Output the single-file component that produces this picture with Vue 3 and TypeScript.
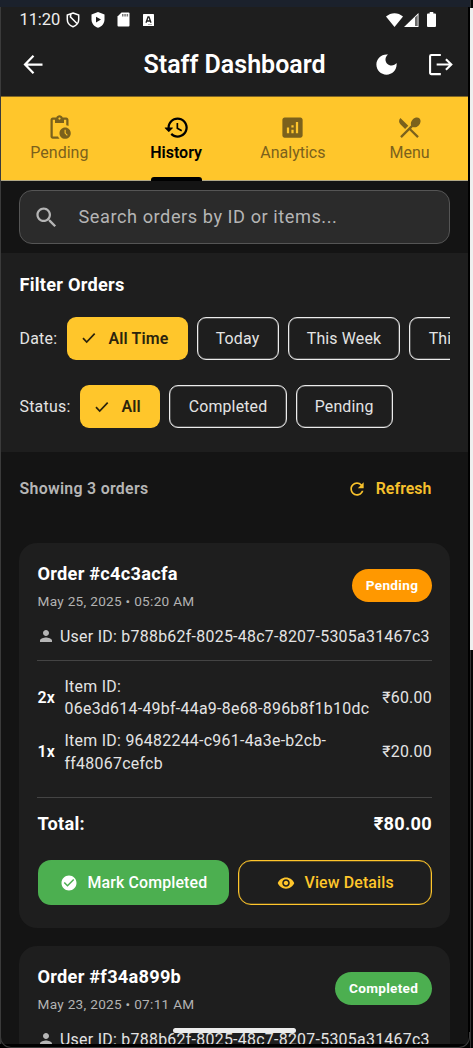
<script setup lang="ts">
interface Item { qty: string; lines: string[]; price: string }
interface Order { id: string; date: string; status: string; user: string; items: Item[]; total: string }

const icons = {
  pending: 'M17 12c-2.76 0-5 2.24-5 5s2.24 5 5 5 5-2.24 5-5-2.24-5-5-5zm1.65 7.35L16.5 17.2V14h1v2.79l1.85 1.85-.7.71zM18 3h-3.18C14.4 1.84 13.3 1 12 1s-2.4.84-2.82 2H6c-1.1 0-2 .9-2 2v15c0 1.1.9 2 2 2h6.11c-.59-.57-1.07-1.25-1.42-2H6V5h2v3h8V5h2v5.08c.71.1 1.38.31 2 .6V5c0-1.1-.9-2-2-2zm-6 2c-.55 0-1-.45-1-1s.45-1 1-1 1 .45 1 1-.45 1-1 1z',
  history: 'M13 3c-4.97 0-9 4.03-9 9H1.9c-.3 0-.5.4-.25.65L4.8 15.8c.2.2.5.2.7 0l3.15-3.15c.25-.25.05-.65-.25-.65H6c0-3.87 3.13-7 7-7s7 3.13 7 7-3.13 7-7 7c-1.93 0-3.68-.79-4.94-2.06l-1.42 1.42C8.27 19.99 10.51 21 13 21c4.97 0 9-4.03 9-9s-4.03-9-9-9zm-1 5v5l4.28 2.54.72-1.21-3.5-2.08V8H12z',
  analytics: 'M19 3H5c-1.1 0-2 .9-2 2v14c0 1.1.9 2 2 2h14c1.1 0 2-.9 2-2V5c0-1.1-.9-2-2-2zM9 17H7v-5h2v5zm4 0h-2v-3h2v3zm0-5h-2v-2h2v2zm4 5h-2V7h2v10z',
  menu: 'M8.1 13.34l2.83-2.83L3.91 3.5c-1.56 1.56-1.56 4.09 0 5.66l4.19 4.18zm6.78-1.81c1.53.71 3.68.21 5.27-1.38 1.91-1.91 2.28-4.65.81-6.12-1.46-1.46-4.2-1.1-6.12.81-1.59 1.59-2.09 3.74-1.38 5.27L3.7 19.87l1.41 1.41L12 14.41l6.88 6.88 1.41-1.41L13.41 13l1.47-1.47z',
  search: 'M15.5 14h-.79l-.28-.27C15.41 12.59 16 11.11 16 9.5 16 5.91 13.09 3 9.5 3S3 5.91 3 9.5 5.91 16 9.5 16c1.61 0 3.09-.59 4.23-1.57l.27.28v.79l5 4.99L20.49 19l-4.99-5zm-6 0C7.01 14 5 11.99 5 9.5S7.01 5 9.5 5 14 7.01 14 9.5 11.99 14 9.5 14z',
  moon: 'M12 3c-4.97 0-9 4.03-9 9s4.03 9 9 9 9-4.03 9-9c0-.46-.04-.92-.1-1.36-.98 1.37-2.58 2.26-4.4 2.26-2.98 0-5.4-2.42-5.4-5.4 0-1.81.89-3.42 2.26-4.4-.44-.06-.9-.1-1.36-.1z',
  person: 'M12 12c2.21 0 4-1.79 4-4s-1.79-4-4-4-4 1.79-4 4 1.79 4 4 4zm0 2c-2.67 0-8 1.34-8 4v2h16v-2c0-2.66-5.33-4-8-4z',
  refresh: 'M17.65 6.35C16.2 4.9 14.21 4 12 4c-4.42 0-7.99 3.58-7.99 8s3.57 8 7.99 8c3.73 0 6.84-2.55 7.73-6h-2.08c-.82 2.33-3.04 4-5.65 4-3.31 0-6-2.69-6-6s2.69-6 6-6c1.66 0 3.14.69 4.22 1.78L13 11h7V4l-2.35 2.35z',
  checkCircle: 'M12 2C6.48 2 2 6.48 2 12s4.48 10 10 10 10-4.48 10-10S17.52 2 12 2zm-2 15l-5-5 1.41-1.41L10 14.17l7.59-7.59L19 8l-9 9z',
  eye: 'M12 4.5C7 4.5 2.73 7.61 1 12c1.73 4.39 6 7.5 11 7.5s9.27-3.11 11-7.5c-1.73-4.39-6-7.5-11-7.5zM12 17c-2.76 0-5-2.24-5-5s2.24-5 5-5 5 2.24 5 5-2.24 5-5 5zm0-8c-1.66 0-3 1.34-3 3s1.34 3 3 3 3-1.34 3-3-1.34-3-3-3z',
}

const tabs = [
  { name: 'Pending', icon: icons.pending, active: false },
  { name: 'History', icon: icons.history, active: true },
  { name: 'Analytics', icon: icons.analytics, active: false },
  { name: 'Menu', icon: icons.menu, active: false },
]
const filters = [
  { label: 'Date:', key: 'date', options: ['All Time', 'Today', 'This Week', 'This Month'] },
  { label: 'Status:', key: 'status', options: ['All', 'Completed', 'Pending'] },
]
const user = 'b788b62f-8025-48c7-8207-5305a31467c3'
const orders: Order[] = [
  {
    id: 'c4c3acfa', date: 'May 25, 2025 • 05:20 AM', status: 'Pending', user, total: '₹80.00',
    items: [
      { qty: '2x', lines: ['Item ID:', '06e3d614-49bf-44a9-8e68-896b8f1b10dc'], price: '₹60.00' },
      { qty: '1x', lines: ['Item ID: 96482244-c961-4a3e-b2cb-', 'ff48067cefcb'], price: '₹20.00' },
    ],
  },
  { id: 'f34a899b', date: 'May 23, 2025 • 07:11 AM', status: 'Completed', user, total: '', items: [] },
]
</script>

<template>
  <div class="desktop">
    <div class="window-top"></div>
    <div class="window-side"><i></i></div>
    <main class="phone">
      <div class="statusbar">
        <span class="clock">11:20</span>
        <svg class="s-shield" viewBox="0 0 14 16"><path d="M7 1 12.7 3v4.6c0 3.5-2.4 6-5.7 7.2C3.7 13.6 1.3 11.100 1.300 7.600V3z" fill="none" stroke="#fff" stroke-width="1.5" /><path d="M4.700 2 4.500 5 11 11.500" fill="none" stroke="#fff" stroke-width="1.600" /></svg>
        <svg class="s-play" viewBox="0 0 14 16"><path d="M7 0 13.500 2.400v5c0 4-2.700 7-6.500 8.300C3.200 14.400.5 11.400.5 7.400v-5z" fill="#fff" /><path d="M5 4.800v5.600l5-2.800z" fill="#1e1e1e" /></svg>
        <svg class="s-card" viewBox="0 0 13 15"><path d="M4.500.5h7a1 1 0 0 1 1 1v12a1 1 0 0 1-1 1h-10a1 1 0 0 1-1-1v-9z" fill="#fff" /><path d="M5 2h1.500v2.600H5zm2.300 0h1.500v2.600H7.300zm2.300 0h1.500v2.600H9.600z" fill="#777" /></svg>
        <svg class="s-a" viewBox="0 0 11 12"><rect width="11" height="12" rx=".6" fill="#fff" /><path d="M3 8.700 5 3h1l2 5.700M3.700 7h3.600" fill="none" stroke="#222" stroke-width="1.300" /><path d="M5 10.500h4" stroke="#999" stroke-width=".8" /></svg>
        <span class="grow"></span>
        <svg class="s-wifi" viewBox="0 0 17 14"><path d="M8.500 14 0 3.500C5-1 12-1 17 3.500z" fill="#fff" /></svg>
        <svg class="s-cell" viewBox="0 0 15 14"><path d="M0 14 14.500 0v14z" fill="#fff" /><path d="M11 4.500 13.700 2v11H11z" fill="#6b6b6b" /></svg>
        <svg class="s-batt" viewBox="0 0 9 15"><path d="M2.700 0h3.600v1.500H8a1 1 0 0 1 1 1V14a1 1 0 0 1-1 1H1a1 1 0 0 1-1-1V2.500a1 1 0 0 1 1-1h1.700z" fill="#fff" /></svg>
      </div>

      <header class="appbar">
        <svg class="back" viewBox="0 0 24 24"><path d="M20 12H5M12 4.300 4.500 12l7.500 7.700" fill="none" stroke="#fff" stroke-width="2" /></svg>
        <h1>Staff Dashboard</h1>
        <svg class="moon" viewBox="0 0 24 24"><path :d="icons.moon" fill="#fff" /></svg>
        <svg class="logout" viewBox="0 0 24 22"><path d="M12.300 1.800H3.200a1.200 1.200 0 0 0-1.200 1.200v16a1.200 1.200 0 0 0 1.200 1.200h9.100" fill="none" stroke="#fff" stroke-width="2" /><path d="M8.300 11H22M17.200 5.900 22.400 11l-5.200 5.100" fill="none" stroke="#fff" stroke-width="2" /></svg>
      </header>

      <nav class="tabs">
        <div v-for="t in tabs" :key="t.name" class="tab" :class="{ active: t.active }">
          <svg viewBox="0 0 24 24"><path :d="t.icon" fill="currentColor" /></svg>
          <span>{{ t.name }}</span>
          <i v-if="t.active"></i>
        </div>
      </nav>

      <section class="search-area">
        <div class="search">
          <svg viewBox="0 0 24 24"><path :d="icons.search" fill="currentColor" /></svg>
          <span>Search orders by ID or items...</span>
        </div>
      </section>

      <section class="filters">
        <h2>Filter Orders</h2>
        <div v-for="f in filters" :key="f.key" class="filter-row" :class="f.key">
          <span class="label">{{ f.label }}</span>
          <div v-for="(o, i) in f.options" :key="o" class="chip" :class="{ selected: i === 0 }">
            <svg v-if="i === 0" viewBox="0 0 14 12"><path d="M1 6.100 4.700 10 12.700 1.700" fill="none" stroke="#2c240d" stroke-width="1.700" /></svg>
            <span>{{ o }}</span>
          </div>
        </div>
      </section>

      <div class="summary">
        <span class="showing">Showing 3 orders</span>
        <div class="refresh">
          <svg viewBox="0 0 24 24"><path :d="icons.refresh" fill="currentColor" /></svg>
          <span>Refresh</span>
        </div>
      </div>

      <section class="orders">
        <article v-for="o in orders" :key="o.id" class="order">
          <div class="head">
            <div class="head-text">
              <h3>Order #{{ o.id }}</h3>
              <p>{{ o.date }}</p>
            </div>
            <span class="badge" :class="o.status.toLowerCase()">{{ o.status }}</span>
          </div>
          <div class="user">
            <svg viewBox="0 0 24 24"><path :d="icons.person" fill="currentColor" /></svg>
            <span>User ID: {{ o.user }}</span>
          </div>
          <template v-if="o.items.length">
            <div class="rule"></div>
            <div class="items">
              <div v-for="it in o.items" :key="it.qty" class="item">
                <b>{{ it.qty }}</b>
                <div class="desc"><div v-for="l in it.lines" :key="l"><span>{{ l }}</span></div></div>
                <span class="price">{{ it.price }}</span>
              </div>
            </div>
            <div class="rule"></div>
            <div class="total"><span>Total:</span><span>{{ o.total }}</span></div>
            <div class="actions">
              <button class="done">
                <svg viewBox="0 0 24 24"><path :d="icons.checkCircle" fill="currentColor" /></svg><span>Mark Completed</span>
              </button>
              <button class="view">
                <svg viewBox="0 0 24 24"><path :d="icons.eye" fill="currentColor" /></svg><span>View Details</span>
              </button>
            </div>
          </template>
        </article>
      </section>
      <div class="home-bar"></div>
    </main>
    <div class="frame-bottom"></div>
  </div>
</template>

<style>
body { margin: 0; background: #000; overflow: hidden; }
</style>

<style scoped>
* { box-sizing: border-box; }
h1, h2, h3, p { margin: 0; }
svg { display: block; flex: none; }
.desktop { position: relative; width: 473px; height: 1048px; overflow: hidden; background: #000; font-family: Roboto, sans-serif; color: #e4e4e4; white-space: nowrap; }
.window-top { height: 7px; width: 470px; background: #1b212c; }
.window-side { position: absolute; right: 0; top: 0; width: 3px; height: 1048px; background: #050505; border-left: 1px solid #333; }
.window-side i { position: absolute; left: -1px; top: 8px; width: 3px; height: 642px; background: #efefef; }
.phone { position: relative; width: 468px; height: 1037px; border-left: 1px solid #3b3b3b; background: #141414; overflow: hidden; display: flex; flex-direction: column; }
.frame-bottom { position: absolute; left: 0; top: 1032px; width: 470px; height: 16px; border: 1px solid #3b3b3b; border-top: 0; border-radius: 0 0 11px 11px; }

.statusbar { height: 25px; flex: none; background: #1e1e1e; display: flex; align-items: center; padding: 0 32px 0 18.500px; }
.clock { font-size: 16.5px; line-height: 24px; color: #eee; width: 46px; letter-spacing: -.1px; }
.s-shield { width: 14px; height: 16px; }
.s-play { width: 14px; height: 16px; margin-left: 11px; }
.s-card { width: 13px; height: 15px; margin-left: 12px; }
.s-a { width: 11px; height: 12px; margin-left: 13px; }
.grow { flex: 1; }
.s-wifi { width: 17px; height: 14px; }
.s-cell { width: 15px; height: 14px; margin-left: 1px; }
.s-batt { width: 9px; height: 15px; margin-left: 8px; }

.appbar { height: 64px; flex: none; background: #1e1e1e; display: flex; align-items: center; padding: 1px 0 0 19px; }
.back { width: 27px; height: 27px; }
h1 { width: 186px; margin-left: 96.500px; font-size: 25px; font-weight: 600; line-height: 32px; padding-top: 1px; color: #fff; }
.moon { width: 27px; height: 27px; margin-left: 43.500px; }
.logout { width: 25px; height: 23px; margin-left: 28px; }

.tabs { height: 85px; flex: none; background: #ffc62b; border-top: 1px solid #7e6525; border-bottom: 1px solid #b2a987; display: flex; }
.tab { position: relative; flex: 1; display: flex; flex-direction: column; align-items: center; padding-top: 17px; color: #7b611c; font-size: 16px; line-height: 22px; letter-spacing: 0; }
.tab svg { width: 27px; height: 27px; margin-bottom: 1px; }
.tab.active { color: #000; font-weight: 600; letter-spacing: 0; }
.tab i { position: absolute; bottom: -1px; width: 51px; height: 4px; background: #000; border-radius: 3px 3px 0 0; }

.search-area { height: 72px; flex: none; padding: 9px 18px 9px; }
.search { height: 54px; border: 1px solid #555; border-radius: 13px; background: #2b2b2b; display: flex; align-items: center; padding-left: 13px; color: #b5b5b5; }
.search svg { width: 27px; height: 27px; }
.search span { margin-left: 18.500px; font-size: 18.2px; letter-spacing: .54px; line-height: 26px; }

.filters { height: 199px; flex: none; background: #1e1e1e; padding: 20px 18px 0 18.500px; }
h2 { font-size: 18.2px; line-height: 24px; font-weight: 700; color: #fff; letter-spacing: .25px; }
.filter-row { display: flex; align-items: center; height: 44px; margin-top: 19px; overflow: hidden; font-size: 15.9px; }
.filter-row.status { margin-top: 24.500px; }
.label { width: 47px; letter-spacing: .24px; flex: none; }
.status .label { width: 60px; }
.chip { height: 43px; flex: none; border: 1px solid #ececec; box-shadow: inset 0 0 0 .5px rgba(236, 236, 236, .5); border-radius: 9px; padding: 0 18.200px; margin-right: 9px; display: flex; align-items: center; letter-spacing: .17px; }
.chip.selected { border: 0; box-shadow: none; background: #ffc62b; color: #2c240d; font-weight: 600; padding: 0 19px 0 15px; }
.status .chip.selected { padding-right: 19.600px; }
.chip svg { width: 14px; height: 12px; margin-right: 13px; }

.summary { height: 91px; flex: none; display: flex; padding: 26px 36.500px 0 18.500px; font-size: 15.9px; line-height: 22px; justify-content: space-between; }
.showing { font-weight: 600; color: #b6b6b6; letter-spacing: .29px; }
.refresh { display: flex; height: 22px; align-items: center; color: #f7c12c; font-weight: 600; letter-spacing: .05px; }
.refresh svg { width: 20px; height: 20px; margin-right: 9px; }

.orders { display: flex; flex-direction: column; gap: 18px; padding: 0 18px; }
.order { border-radius: 18px; background: #1e1e1e; padding: 18px 18px 23px; flex: none; }
.head { display: flex; justify-content: space-between; align-items: center; height: 50px; }
.head-text { padding: 1px 0 0 .5px; }
h3 { font-size: 18.2px; font-weight: 700; line-height: 26px; color: #fff; letter-spacing: .26px; }
p { font-size: 13.6px; line-height: 24px; margin-top: 2px; letter-spacing: .3px; color: #b3b3b3; }
.badge { height: 33px; border-radius: 17px; line-height: 33px; padding: 0 13.800px; margin-top: -2px; font-size: 13.6px; font-weight: 700; color: #fff; letter-spacing: .3px; }
.badge.pending { background: #ff9800; }
.badge.completed { background: #4caf50; }
.user { display: flex; align-items: center; height: 22px; margin-top: 14px; font-size: 15.9px; letter-spacing: .28px; }
.user svg { width: 18px; height: 18px; margin-right: 5px; color: #b6b6b6; }
.rule { height: 1px; background: #444; margin-top: 13px; }
.items { padding-top: 14.500px; display: flex; flex-direction: column; gap: 9px; height: 123px; font-size: 15.9px; line-height: 22.700px; letter-spacing: .28px; }
.items + .rule { margin-top: 13px; }
.item { display: flex; align-items: center; height: 45.400px; flex: none; padding-left: .5px; }
.item b { width: 27px; color: #fff; font-weight: 600; flex: none; }
.desc { flex: 1; }
.total { display: flex; justify-content: space-between; margin-top: 13px; height: 26px; line-height: 26px; font-size: 18.2px; font-weight: 700; color: #fff; letter-spacing: .28px; padding-left: .5px; }
.actions { display: flex; gap: 9px; margin-top: 23px; padding-left: .5px; }
button { flex: 1; height: 45px; border-radius: 13px; border: 0; display: flex; align-items: center; justify-content: center; font: 500 15.9px Roboto, sans-serif; color: #fff; letter-spacing: .14px; padding: 0 0 0 1px; }
button svg { width: 18px; height: 18px; margin-right: 9px; }
.done { background: #4caf50; }
.view { background: transparent; border: 1px solid #ffc62b; box-shadow: inset 0 0 0 .5px rgba(255, 198, 43, .5); color: #ffc62b; }
.home-bar { position: absolute; left: 172px; top: 1021px; width: 123px; height: 5px; border-radius: 3px; background: #ececec; }
</style>
